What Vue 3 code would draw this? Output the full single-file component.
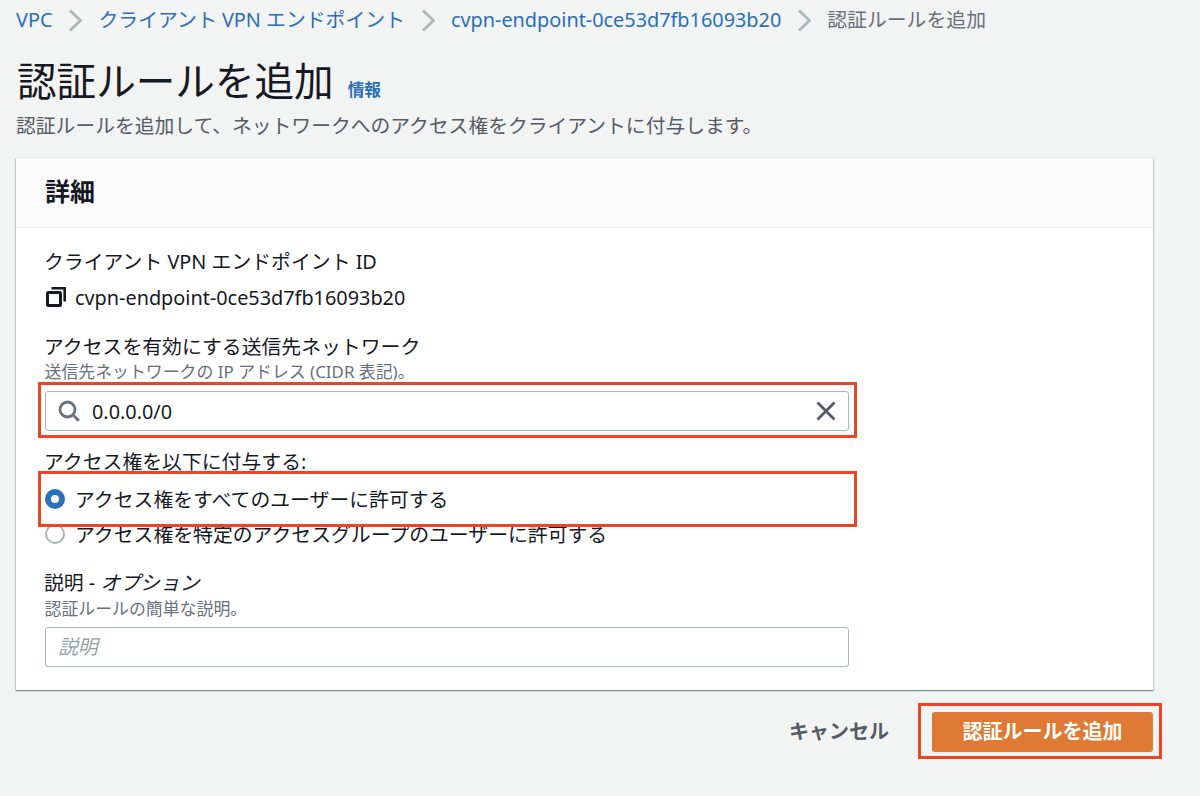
<script setup>
const crumbs = ['VPC', 'クライアント VPN エンドポイント', 'cvpn-endpoint-0ce53d7fb16093b20']
</script>

<template>
  <div class="page">
    <nav class="crumbs">
      <template v-for="c in crumbs" :key="c">
        <a class="crumb">{{ c }}</a>
        <svg class="sep" width="14" height="23" viewBox="0 0 14 23"><path d="M2 1.5l10.5 10-10.5 10" fill="none" stroke="#aab7b8" stroke-width="2.8"/></svg>
      </template>
      <span class="crumb-current">認証ルールを追加</span>
    </nav>
    <div class="title-row">
      <h1>認証ルールを追加</h1>
      <a class="info">情報</a>
    </div>
    <p class="sub">認証ルールを追加して、ネットワークへのアクセス権をクライアントに付与します。</p>

    <section class="card">
      <header class="card-head"><h2>詳細</h2></header>
      <div class="card-body">
        <div class="label l1">クライアント VPN エンドポイント ID</div>
        <div class="endpoint">
          <svg width="20" height="20" viewBox="0 0 20 20" fill="none" stroke="#16191f">
            <rect x="1.5" y="5.5" width="13" height="13" rx="1" stroke-width="3"/>
            <path d="M5.5 1.3h13.2v13.2" stroke-width="2.6"/>
          </svg>
          <span>cvpn-endpoint-0ce53d7fb16093b20</span>
        </div>
        <div class="label l2">アクセスを有効にする送信先ネットワーク</div>
        <div class="hint h1">送信先ネットワークの IP アドレス (CIDR 表記)。</div>
        <div class="input search">
          <svg width="22" height="22" viewBox="0 0 22 22" fill="none" stroke="#687078" stroke-width="2.8">
            <circle cx="9.5" cy="9.5" r="7.5"/><path d="M14.8 14.8l6 6"/>
          </svg>
          <span class="value">0.0.0.0/0</span>
          <svg class="clear" width="20" height="20" viewBox="0 0 20 20" fill="none" stroke="#545b64" stroke-width="2.8"><path d="M1.5 1.5l17 17M18.5 1.5l-17 17"/></svg>
        </div>
        <div class="label l3">アクセス権を以下に付与する:</div>
        <div class="radio r1"><i class="dot on"></i><span>アクセス権をすべてのユーザーに許可する</span></div>
        <div class="radio r2"><i class="dot"></i><span>アクセス権を特定のアクセスグループのユーザーに許可する</span></div>
        <div class="label l4">説明 - <em>オプション</em></div>
        <div class="hint h2">認証ルールの簡単な説明。</div>
        <div class="input desc"><em>説明</em></div>
      </div>
    </section>

    <footer class="actions">
      <span class="cancel">キャンセル</span>
      <button class="primary">認証ルールを追加</button>
    </footer>

    <div class="mark m1"></div>
    <div class="mark m2"></div>
    <div class="mark m3"></div>
  </div>
</template>

<style scoped>
.page {
  position: relative;
  width: 1200px;
  height: 796px;
  overflow: hidden;
  box-sizing: border-box;
  padding: 0 47px 0 16px;
  background: #f2f3f3;
  color: #16191f;
  font-family: "Noto Sans", "Noto Sans CJK JP", sans-serif;
  font-size: 19.85px;
}
.crumbs {
  display: flex;
  align-items: center;
  height: 40px;
  margin-bottom: 16px;
  padding-top: 2px;
  box-sizing: border-box;
  white-space: nowrap;
  line-height: 27px;
}
.crumb { color: #2b6fb8; margin-top: -4px; }
.crumb-current { color: #687078; margin-top: -4px; }
.sep { margin: -2px 16px 0; }
.title-row {
  display: flex;
  align-items: baseline;
  height: 50px;
}
h1 {
  margin: 0 0 0 1px;
  font-size: 39.6px;
  font-weight: 400;
  line-height: 50px;
}
.info {
  margin-left: 14px;
  font-size: 16.7px;
  font-weight: 700;
  color: #2b6fb8;
}
.sub {
  margin: 6px 0 0 0;
  font-size: 19.8px;
  line-height: 27px;
  color: #545b64;
  white-space: nowrap;
}
.card {
  margin-top: 19px;
  height: 532px;
  background: #fff;
  box-shadow: 0 1px 1px 0 rgba(0, 28, 36, .3), 1px 1px 1px 0 rgba(0, 28, 36, .15), -1px 1px 1px 0 rgba(0, 28, 36, .15), 0 -1px 1px 0 rgba(0, 28, 36, .04);
}
.card-head {
  height: 70px;
  box-sizing: border-box;
  padding: 0 29px 3px;
  background: #fafafa;
  border-bottom: 1px solid #eaeded;
  display: flex;
  align-items: center;
}
h2 {
  margin: 0;
  font-size: 25px;
  font-weight: 700;
  line-height: 34px;
}
.card-body {
  padding: 20px 29px 0;
  display: flex;
  flex-direction: column;
  align-items: flex-start;
}
.label { line-height: 28px; white-space: nowrap; margin-left: -1px; }
.l2 { margin-top: 22px; }
.l3 { margin-top: 17px; }
.l4 { margin-top: 18px; }
em { font-style: italic; }
.endpoint {
  display: flex;
  align-items: center;
  gap: 9px;
  margin: 7px 0 0 1px;
  height: 28px;
}
.hint {
  font-size: 16.9px;
  line-height: 20px;
  color: #687078;
  white-space: nowrap;
  margin-left: -0.5px;
}
.h1 { margin-top: 1px; }
.h2 { margin-top: 2px; }
.input {
  box-sizing: border-box;
  width: 804px;
  height: 40px;
  border: 1px solid #aab7b8;
  border-radius: 3px;
  background: #fff;
  display: flex;
  align-items: center;
}
.search {
  margin-top: 9px;
  padding: 0 12px;
}
.value { margin-left: 12px; flex: 1; }
.desc {
  margin-top: 8px;
  padding: 0 12px 3px;
  color: #95a5a6;
}
.radio {
  display: flex;
  align-items: center;
  gap: 10px;
  height: 35px;
  white-space: nowrap;
}
.r1 { margin-top: 5px; }
.dot {
  box-sizing: border-box;
  width: 20px;
  height: 20px;
  border-radius: 50%;
  border: 2px solid #aab7b8;
  background: #fff;
}
.dot.on { border: 6px solid #2b6fb8; }
.actions {
  display: flex;
  justify-content: flex-end;
  align-items: center;
  gap: 43px;
  margin-top: 22px;
}
.cancel {
  margin-top: -4px;
  font-size: 20px;
  font-weight: 700;
  color: #545b64;
}
.primary {
  width: 221px;
  height: 40px;
  padding: 0 0 3px;
  border: 0;
  border-radius: 3px;
  background: #de7a33;
  color: #fff;
  font: inherit;
  font-size: 20px;
  font-weight: 700;
}
.mark {
  position: absolute;
  box-sizing: border-box;
  border: 3px solid #ee4425;
}
.m1 { left: 38px; top: 382px; width: 819px; height: 56px; }
.m2 { left: 38px; top: 471px; width: 819px; height: 56px; }
.m3 { left: 918px; top: 703px; width: 244px; height: 56px; }
</style>
